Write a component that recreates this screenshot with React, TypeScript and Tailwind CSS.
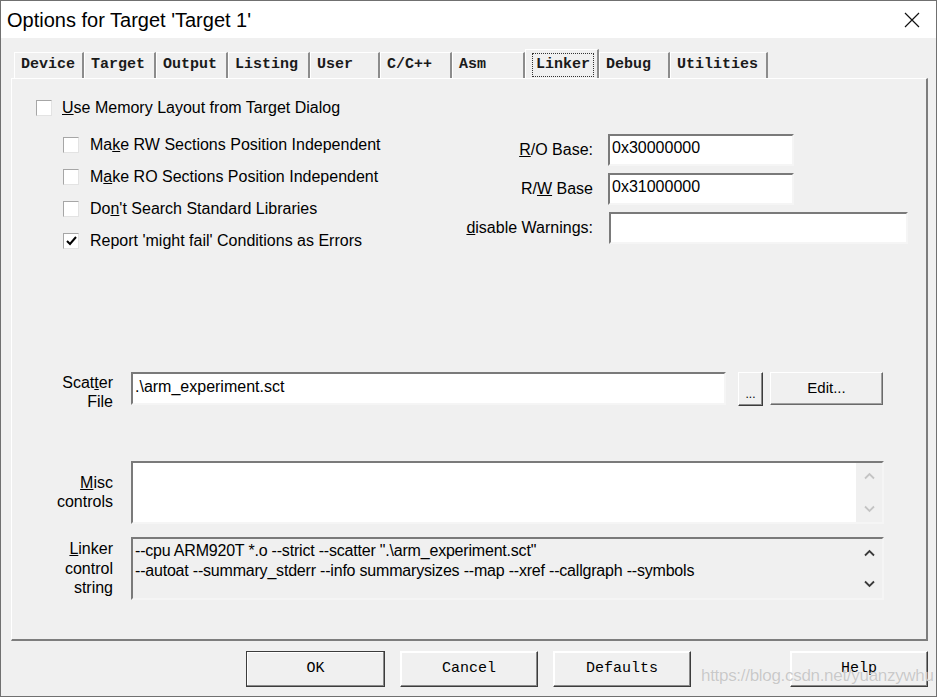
import React from "react";

const TABS = [
  { label: "Device", w: "w-[70px]" },
  { label: "Target", w: "w-[72px]" },
  { label: "Output", w: "w-[72px]" },
  { label: "Listing", w: "w-[82px]" },
  { label: "User", w: "w-[70px]" },
  { label: "C/C++", w: "w-[72px]" },
  { label: "Asm", w: "w-[73px]" },
  { label: "Linker", w: "w-[74px]", active: true },
  { label: "Debug", w: "w-[71px]" },
  { label: "Utilities", w: "w-[98px]" },
];

const sans = "font-['Liberation_Sans',Arial,sans-serif]";
const mono = "font-['Liberation_Mono','DejaVu_Sans_Mono',monospace]";

function Checkbox({ checked = false }: { checked?: boolean }) {
  return (
    <div className="w-[16px] h-[16px] shrink-0 bg-white border border-t-[#a6a6a6] border-l-[#a6a6a6] border-r-[#e3e3e3] border-b-[#e3e3e3] flex items-center justify-center">
      {checked && (
        <svg width="11" height="10" viewBox="0 0 11 10">
          <path d="M1 5 L4 8 L10 1" fill="none" stroke="#000" strokeWidth="2" />
        </svg>
      )}
    </div>
  );
}

function CheckRow({ children, checked }: { children: React.ReactNode; checked?: boolean }) {
  return (
    <div className="h-[32px] flex items-center gap-[11px]">
      <Checkbox checked={checked} />
      <span className="text-[16px] text-black">{children}</span>
    </div>
  );
}

function Field({ value = "", w }: { value?: string; w: string }) {
  return (
    <div
      className={`${w} h-[32px] bg-white border-2 border-t-[#7a7a7a] border-l-[#7a7a7a] border-r-[#f5f5f5] border-b-[#f5f5f5] pl-[2px] pt-[3px] text-[16px] leading-[18px] text-black`}
    >
      {value}
    </div>
  );
}

function Chevron({ up, color }: { up?: boolean; color: string }) {
  return (
    <svg width="11" height="8" viewBox="0 0 11 8">
      <path
        d={up ? "M1 6.5 L5.5 2 L10 6.5" : "M1 1.5 L5.5 6 L10 1.5"}
        fill="none"
        stroke={color}
        strokeWidth="1.8"
      />
    </svg>
  );
}

function Button({ children, w, focus }: { children: React.ReactNode; w: string; focus?: boolean }) {
  return (
    <div
      className={`${w} h-[36px] ${
        focus ? "border border-[#3c3c3c]" : "border border-t-white border-l-white border-r-[#3c3c3c] border-b-[#3c3c3c]"
      } bg-[#f0f0f0] shadow-[inset_-1px_-1px_#8a8a8a,inset_1px_1px_#ffffff] flex items-center justify-center ${mono} text-[15px] text-black`}
    >
      {children}
    </div>
  );
}

export default function App() {
  return (
    <div className={`w-[937px] h-[697px] border border-[#707070] bg-[#f0f0f0] flex flex-col ${sans}`}>
      {/* title bar */}
      <div className="h-[37px] bg-white flex items-center justify-between pl-[6px] pr-[16px]">
        <span className="text-[20px] text-black">Options for Target 'Target 1'</span>
        <svg width="16" height="16" viewBox="0 0 16 16">
          <path d="M1 1 L15 15 M15 1 L1 15" stroke="#111" strokeWidth="1.2" />
        </svg>
      </div>

      {/* tabs */}
      <div className="pt-[11px] pl-[13px] flex items-end h-[40px]">
        {TABS.map((t) => (
          <div
            key={t.label}
            className={`${t.w} ${
              t.active ? "h-[29px] pt-[2px]" : "h-[26px]"
            } shrink-0 border-l border-t border-white border-r-2 border-r-[#8c8c8c] pl-[6px] flex items-center ${mono} text-[15px] font-bold text-[#1a1a1a]`}
          >
            {t.active ? (
              <span className="border border-dotted border-[#333] px-[3px] leading-[22px]">{t.label}</span>
            ) : (
              t.label
            )}
          </div>
        ))}
      </div>

      {/* panel */}
      <div className="ml-[10px] w-[917px] h-[563px] border-l border-t border-white border-r-2 border-b-2 border-r-[#7d7d7d] border-b-[#7d7d7d] text-black">
        <div className="pt-[21px] pl-[24px] flex items-center gap-[10px] h-[37px]">
          <Checkbox />
          <span className="text-[16px]">
            <u>U</u>se Memory Layout from Target Dialog
          </span>
        </div>

        <div className="flex mt-[13px] h-[128px]">
          <div className="w-[448px] pl-[51px] flex flex-col">
            <CheckRow>
              Ma<u>k</u>e RW Sections Position Independent
            </CheckRow>
            <CheckRow>
              M<u>a</u>ke RO Sections Position Independent
            </CheckRow>
            <CheckRow>
              Do<u>n</u>'t Search Standard Libraries
            </CheckRow>
            <CheckRow checked>
              Report 'mi<u>g</u>ht fail' Conditions as Errors
            </CheckRow>
          </div>
          <div className="mt-[5px] flex flex-col gap-[7px]">
            <div className="flex items-center gap-[15px]">
              <span className="w-[133px] text-right text-[16px]">
                <u>R</u>/O Base:
              </span>
              <Field value="0x30000000" w="w-[186px]" />
            </div>
            <div className="flex items-center gap-[15px]">
              <span className="w-[133px] text-right text-[16px]">
                R/<u>W</u> Base
              </span>
              <Field value="0x31000000" w="w-[186px]" />
            </div>
            <div className="flex items-center gap-[16px]">
              <span className="w-[133px] text-right text-[16px] whitespace-nowrap">
                <u>d</u>isable Warnings:
              </span>
              <Field w="w-[299px]" />
            </div>
          </div>
        </div>

        {/* scatter file */}
        <div className="flex items-start mt-[115px]">
          <div className="w-[101px] text-right text-[16px] leading-[19px] pt-[1px]">
            <div>
              Scat<u>t</u>er
            </div>
            <div>File</div>
          </div>
          <div className="ml-[18px] w-[595px] h-[33px] bg-white border-2 border-t-[#7a7a7a] border-l-[#7a7a7a] border-r-[#f5f5f5] border-b-[#f5f5f5] pl-[2px] pt-[4px] text-[16px] leading-[18px]">
            .\arm_experiment.sct
          </div>
          <div className="ml-[12px] w-[25px] h-[34px] border border-t-white border-l-white border-r-[#3c3c3c] border-b-[#3c3c3c] shadow-[inset_-1px_-1px_#8a8a8a] flex items-end justify-center pb-[5px] text-[12px] leading-none">
            ...
          </div>
          <div className="ml-[7px] w-[113px] h-[33px] border border-t-white border-l-white border-r-[#6a6a6a] border-b-[#6a6a6a] shadow-[inset_-1px_-1px_#a0a0a0] flex items-center justify-center text-[15px]">
            Edit...
          </div>
        </div>

        {/* misc controls */}
        <div className="flex items-start mt-[50px]">
          <div className="w-[101px] text-right text-[16px] leading-[19px] pt-[12px]">
            <div>
              <u>M</u>isc
            </div>
            <div>controls</div>
          </div>
          <div className="ml-[18px] w-[753px] h-[63px] bg-white border-2 border-t-[#7a7a7a] border-l-[#7a7a7a] border-r-[#f5f5f5] border-b-[#f5f5f5] flex">
            <div className="flex-1" />
            <div className="w-[26px] bg-[#f0f0f0] flex flex-col items-center justify-between py-[9px]">
              <Chevron up color="#c4c4c4" />
              <Chevron color="#c4c4c4" />
            </div>
          </div>
        </div>

        {/* linker control string */}
        <div className="flex items-start mt-[13px]">
          <div className="w-[101px] text-right text-[16px] leading-[19.5px] pt-[2px]">
            <div>
              <u>L</u>inker
            </div>
            <div>control</div>
            <div>string</div>
          </div>
          <div className="ml-[18px] w-[753px] h-[63px] bg-[#f0f0f0] border-2 border-t-[#7a7a7a] border-l-[#7a7a7a] border-r-[#f5f5f5] border-b-[#f5f5f5] flex">
            <div className="flex-1 pl-[2px] pt-[2px] text-[16px] leading-[20px] tracking-[-0.2px]">
              <div>--cpu ARM920T *.o --strict --scatter ".\arm_experiment.sct"</div>
              <div>--autoat --summary_stderr --info summarysizes --map --xref --callgraph --symbols</div>
            </div>
            <div className="w-[26px] flex flex-col items-center justify-between py-[10px]">
              <Chevron up color="#3a3a3a" />
              <Chevron color="#3a3a3a" />
            </div>
          </div>
        </div>
      </div>

      {/* buttons */}
      <div className="relative flex pt-[10px] pl-[245px]">
        <Button w="w-[139px]" focus>
          OK
        </Button>
        <div className="ml-[15px]">
          <Button w="w-[138px]">Cancel</Button>
        </div>
        <div className="ml-[15px]">
          <Button w="w-[138px]">Defaults</Button>
        </div>
        <div className="ml-[99px]">
          <Button w="w-[138px]">Help</Button>
        </div>
        <span className="absolute left-[700px] top-[22px] text-[17px] tracking-[-0.3px] text-[#c9c9c9] [text-shadow:0_0_1px_#ffffff]">
          https://blog.csdn.net/yuanzywhu
        </span>
      </div>
    </div>
  );
}
